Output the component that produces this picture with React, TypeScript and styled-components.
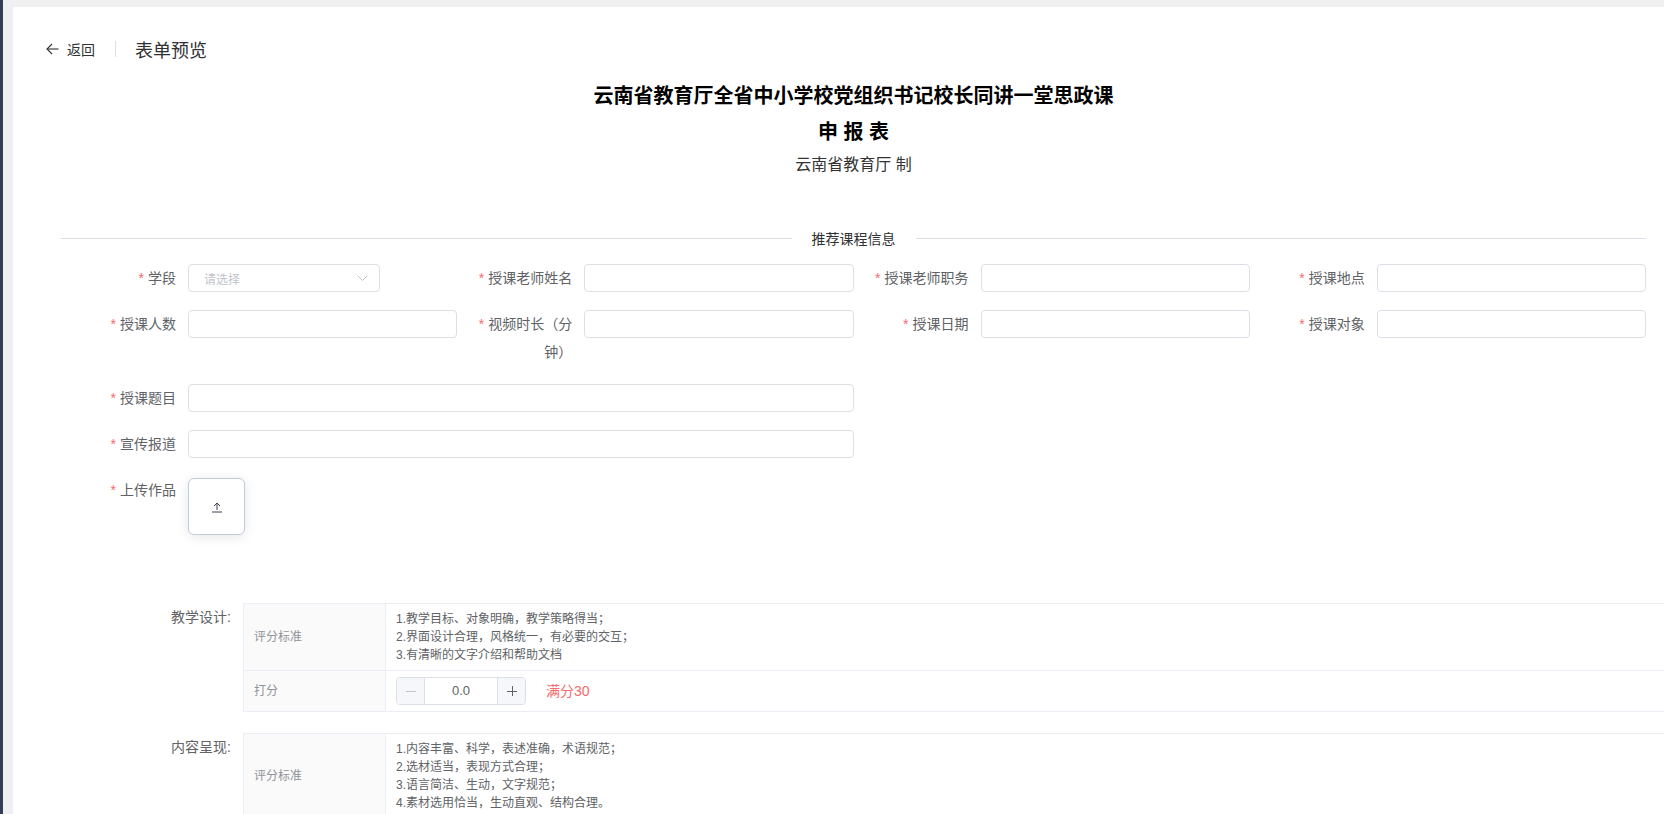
import React from "react";
import styled, { createGlobalStyle } from "styled-components";

type Field = {
  label: string;
  kind?: "input" | "select";
  span?: number;
};

type Criterion = {
  name: string;
  lines: string[];
  full: number;
};

// "|" marks where a long label may wrap
const topFields: Field[] = [
  { label: "学段", kind: "select" },
  { label: "授课老师姓名" },
  { label: "授课老师职务" },
  { label: "授课地点" },
  { label: "授课人数" },
  { label: "视频时长（分|钟）" },
  { label: "授课日期" },
  { label: "授课对象" },
  { label: "授课题目", span: 2 },
  { label: "宣传报道", span: 2 },
];

const criteria: Criterion[] = [
  {
    name: "教学设计:",
    lines: [
      "1.教学目标、对象明确，教学策略得当；",
      "2.界面设计合理，风格统一，有必要的交互；",
      "3.有清晰的文字介绍和帮助文档",
    ],
    full: 30,
  },
  {
    name: "内容呈现:",
    lines: [
      "1.内容丰富、科学，表述准确，术语规范；",
      "2.选材适当，表现方式合理；",
      "3.语言简洁、生动，文字规范；",
      "4.素材选用恰当，生动直观、结构合理。",
    ],
    full: 40,
  },
];

const ArrowBack = () => (
  <svg width="13" height="12" viewBox="0 0 13 12" fill="none" stroke="#303133" strokeWidth="1.1">
    <line x1="1" y1="6" x2="12.5" y2="6" />
    <polyline points="6,1 1,6 6,11" />
  </svg>
);

const Chevron = () => (
  <svg width="11" height="6" viewBox="0 0 11 6" fill="none" stroke="#c0c4cc" strokeWidth="1">
    <polyline points="0.5,0.5 5.5,5.5 10.5,0.5" />
  </svg>
);

const UploadIcon = () => (
  <svg width="12" height="12" viewBox="0 0 12 12" fill="none" stroke="#3a4150" strokeWidth="1">
    <line x1="1" y1="11" x2="11" y2="11" />
    <line x1="6" y1="9" x2="6" y2="2" />
    <polyline points="3,5 6,2 9,5" />
  </svg>
);

const MinusIcon = () => (
  <svg width="10" height="10" viewBox="0 0 10 10" stroke="#c0c4cc" strokeWidth="1">
    <line x1="0" y1="5.5" x2="10" y2="5.5" />
  </svg>
);

const PlusIcon = () => (
  <svg width="10" height="10" viewBox="0 0 10 10" stroke="#606266" strokeWidth="1">
    <line x1="0" y1="5.5" x2="10" y2="5.5" />
    <line x1="5.5" y1="0" x2="5.5" y2="10" />
  </svg>
);

const LabelText = ({ text }: { text: string }) => {
  const parts = text.split("|");
  return (
    <>
      {parts.map((p, i) => (
        <React.Fragment key={i}>
          {i > 0 && <wbr />}
          {p}
        </React.Fragment>
      ))}
    </>
  );
};

export default function App() {
  return (
    <>
      <GlobalStyle />
      <Shell>
        <SideEdge />
        <Main>
          <Panel>
            <TopBar>
              <BackLink>
                <ArrowBack />
                <span>返回</span>
              </BackLink>
              <BarDivider />
              <PageTitle>表单预览</PageTitle>
            </TopBar>

            <Body>
              <FormTitle>云南省教育厅全省中小学校党组织书记校长同讲一堂思政课</FormTitle>
              <FormSubTitle>申 报 表</FormSubTitle>
              <Maker>云南省教育厅 制</Maker>

              <SectionDivider>
                <span>推荐课程信息</span>
              </SectionDivider>

              <FormGrid>
                {topFields.map((f) => (
                  <FormItem key={f.label} $span={f.span || 1}>
                    <Label>
                      <Star>*</Star>
                      <LabelText text={f.label} />
                    </Label>
                    {f.kind === "select" ? (
                      <Select>
                        <span>请选择</span>
                        <Chevron />
                      </Select>
                    ) : (
                      <TextInput />
                    )}
                  </FormItem>
                ))}
                <FormItem $span={4}>
                  <Label>
                    <Star>*</Star>
                    上传作品
                  </Label>
                  <UploadBox>
                    <UploadIcon />
                  </UploadBox>
                </FormItem>
              </FormGrid>

              <ScoreList>
                {criteria.map((c) => (
                  <ScoreItem key={c.name}>
                    <ScoreLabel>{c.name}</ScoreLabel>
                    <ScoreTable>
                      <tbody>
                        <tr>
                          <HeadCell>评分标准</HeadCell>
                          <Cell>
                            {c.lines.map((line) => (
                              <div key={line}>{line}</div>
                            ))}
                          </Cell>
                        </tr>
                        <tr>
                          <HeadCell>打分</HeadCell>
                          <Cell>
                            <ScoreRow>
                              <Stepper>
                                <StepButton $side="left">
                                  <MinusIcon />
                                </StepButton>
                                <StepValue>0.0</StepValue>
                                <StepButton $side="right">
                                  <PlusIcon />
                                </StepButton>
                              </Stepper>
                              <FullMark>满分{c.full}</FullMark>
                            </ScoreRow>
                          </Cell>
                        </tr>
                      </tbody>
                    </ScoreTable>
                  </ScoreItem>
                ))}
              </ScoreList>
            </Body>
          </Panel>
        </Main>
      </Shell>
    </>
  );
}

//Styles
const GlobalStyle = createGlobalStyle`
  html, body {
    margin: 0;
    padding: 0;
  }
  body {
    font-family: "Liberation Sans", "Noto Sans CJK SC", sans-serif;
    background-color: #f0f0f0;
    color: #606266;
  }
  * {
    box-sizing: border-box;
  }
`;
const Shell = styled.div`
  display: flex;
  height: 100vh;
  overflow: hidden;
`;
const SideEdge = styled.div`
  width: 3px;
  flex: none;
  background-color: #304156;
`;
const Main = styled.div`
  flex: 1;
  min-width: 0;
  padding: 7px 0 0 10px;
  background-color: #f0f0f0;
  display: flex;
`;
const Panel = styled.div`
  flex: 1;
  min-width: 0;
  background-color: #fff;
  padding: 30px 18px 0 33px;
  overflow: hidden;
`;
const TopBar = styled.div`
  display: flex;
  align-items: center;
  height: 24px;
`;
const BackLink = styled.div`
  display: flex;
  align-items: center;
  gap: 8px;
  font-size: 14px;
  color: #303133;
  cursor: pointer;
`;
const BarDivider = styled.div`
  width: 1px;
  height: 16px;
  background-color: #dcdfe6;
  margin: 0 19px 0 20px;
`;
const PageTitle = styled.div`
  font-size: 18px;
  color: #303133;
`;
const Body = styled.div`
  margin-left: 15px;
`;
const FormTitle = styled.h1`
  margin: 21px 0 0;
  text-align: center;
  font-size: 20px;
  line-height: 28px;
  font-weight: 700;
  color: #000;
`;
const FormSubTitle = styled(FormTitle)`
  margin-top: 8px;
`;
const Maker = styled.div`
  margin-top: 7px;
  text-align: center;
  font-size: 16px;
  line-height: 24px;
  color: #333;
`;
const SectionDivider = styled.div`
  display: flex;
  align-items: center;
  height: 20px;
  margin-top: 51px;

  &::before,
  &::after {
    content: "";
    flex: 1;
    height: 1px;
    background-color: #dcdfe6;
  }
  span {
    padding: 0 20px;
    font-size: 14px;
    color: #303133;
  }
`;
const FormGrid = styled.div`
  display: grid;
  grid-template-columns: repeat(4, 1fr);
  row-gap: 18px;
  margin-top: 16px;
  align-items: start;
`;
const FormItem = styled.div<{ $span: number }>`
  display: flex;
  align-items: flex-start;
  grid-column: ${(p) => (p.$span > 1 ? `1 / span ${p.$span}` : "auto")};
`;
const Label = styled.label`
  width: 127px;
  flex: none;
  padding-right: 12px;
  text-align: right;
  font-size: 14px;
  line-height: 28px;
  color: #606266;
`;
const Star = styled.span`
  color: #f56c6c;
  margin-right: 4px;
`;
const TextInput = styled.input`
  flex: 1;
  min-width: 0;
  height: 28px;
  border: 1px solid #dcdfe6;
  border-radius: 4px;
  background-color: #fff;
  padding: 0 15px;
  font-size: 12px;
  outline: none;
`;
const Select = styled.div`
  width: 192px;
  height: 28px;
  border: 1px solid #dcdfe6;
  border-radius: 4px;
  padding: 0 11px 0 15px;
  display: flex;
  align-items: center;
  justify-content: space-between;
  font-size: 12px;
  color: #c0c4cc;
`;
const UploadBox = styled.div`
  width: 57px;
  height: 57px;
  margin-top: 2px;
  border: 1px solid #c0ccda;
  border-radius: 6px;
  background-color: #fff;
  box-shadow: 0 2px 12px 0 rgba(0, 0, 0, 0.1);
  display: flex;
  align-items: center;
  justify-content: center;
`;
const ScoreList = styled.div`
  margin-top: 68px;
  display: flex;
  flex-direction: column;
  gap: 21px;
`;
const ScoreItem = styled.div`
  display: flex;
  align-items: flex-start;
`;
const ScoreLabel = styled.div`
  width: 182px;
  flex: none;
  padding-right: 12px;
  text-align: right;
  font-size: 14px;
  line-height: 28px;
  color: #606266;
`;
const ScoreTable = styled.table`
  width: 1440px;
  flex: none;
  border-collapse: collapse;
  font-size: 12px;
  line-height: 18px;
`;
const HeadCell = styled.td`
  width: 142px;
  padding: 6px 10px;
  border: 1px solid #ebeef5;
  background-color: #fafafa;
  color: #909399;
  vertical-align: middle;
`;
const Cell = styled.td`
  padding: 6px 10px;
  border: 1px solid #ebeef5;
  color: #606266;
`;
const ScoreRow = styled.div`
  display: flex;
  align-items: center;
`;
const Stepper = styled.div`
  display: flex;
  width: 130px;
  height: 28px;
  border: 1px solid #dcdfe6;
  border-radius: 4px;
  overflow: hidden;
`;
const StepButton = styled.div<{ $side: "left" | "right" }>`
  width: 28px;
  flex: none;
  background-color: #f5f7fa;
  display: flex;
  align-items: center;
  justify-content: center;
  border-${(p) => (p.$side === "left" ? "right" : "left")}: 1px solid #dcdfe6;
`;
const StepValue = styled.div`
  flex: 1;
  text-align: center;
  line-height: 26px;
  font-size: 13px;
  color: #606266;
`;
const FullMark = styled.span`
  margin-left: 20px;
  font-size: 14px;
  color: #f56c6c;
`;
